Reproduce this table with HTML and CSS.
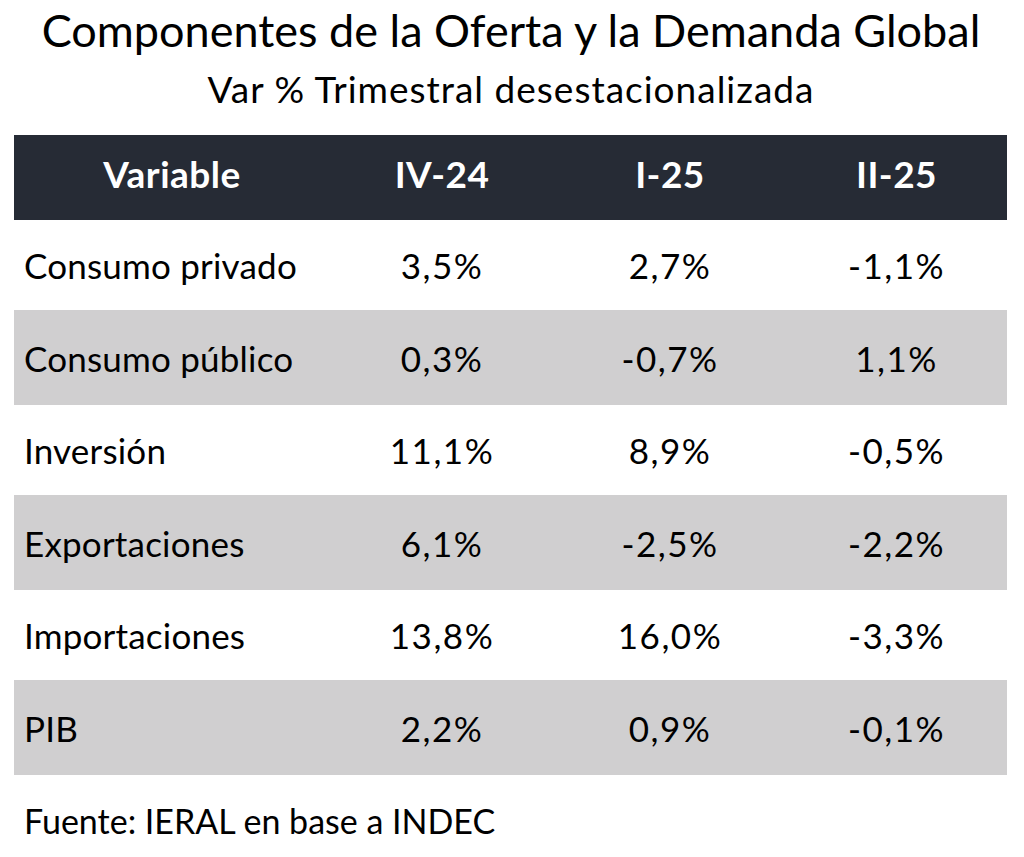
FILE: index.html
```html
<!DOCTYPE html>
<html lang="es">
<head>
<meta charset="utf-8">
<title>Componentes de la Oferta y la Demanda Global</title>
<link rel="stylesheet" href="styles.css">
</head>
<body>
<div class="page">
  <h1 class="title">Componentes de la Oferta y la Demanda Global</h1>
  <p class="subtitle">Var % Trimestral desestacionalizada</p>
  <table class="data">
    <thead>
      <tr><th class="c1">Variable</th><th class="c2">IV-24</th><th class="c3">I-25</th><th class="c4">II-25</th></tr>
    </thead>
    <tbody>
      <tr><td class="label">Consumo privado</td><td>3,5%</td><td>2,7%</td><td>-1,1%</td></tr>
      <tr><td class="label">Consumo público</td><td>0,3%</td><td>-0,7%</td><td>1,1%</td></tr>
      <tr><td class="label">Inversión</td><td>11,1%</td><td>8,9%</td><td>-0,5%</td></tr>
      <tr><td class="label">Exportaciones</td><td>6,1%</td><td>-2,5%</td><td>-2,2%</td></tr>
      <tr><td class="label">Importaciones</td><td>13,8%</td><td>16,0%</td><td>-3,3%</td></tr>
      <tr><td class="label">PIB</td><td>2,2%</td><td>0,9%</td><td>-0,1%</td></tr>
    </tbody>
  </table>
  <p class="source">Fuente: IERAL en base a INDEC</p>
</div>
</body>
</html>
```

FILE: styles.css
```css
html, body {
  margin: 0;
  padding: 0;
  background: #ffffff;
}
.page {
  font-family: Lato, "Open Sans", sans-serif;
  color: #000000;
  padding: 0 16px 0 14px;
}
.title {
  margin: 0;
  padding-top: 2px;
  font-size: 45px;
  font-weight: 400;
  line-height: 56px;
  text-align: center;
}
.subtitle {
  margin: 9px 0 0;
  font-size: 37px;
  line-height: 44px;
  text-align: center;
  letter-spacing: 1px;
}
.data {
  margin-top: 24px;
  width: 993px;
  border-collapse: collapse;
  table-layout: fixed;
}
.data th {
  background: #262b35;
  color: #ffffff;
  font-weight: 700;
  font-size: 37px;
  height: 77px;
  padding: 0 0 8px;
  text-align: center;
  letter-spacing: 0.5px;
}
.c1 { width: 316px; }
.c2 { width: 224px; }
.c3 { width: 232px; }
.c4 { width: 221px; }
.data td {
  font-size: 35px;
  height: 90px;
  padding: 0;
  text-align: center;
  letter-spacing: 1.5px;
}
.data tbody tr:nth-child(even) td {
  background: #d0cfd0;
  height: 95px;
}
.data td.label {
  text-align: left;
  padding-left: 10px;
  letter-spacing: 0.2px;
}
.source {
  margin: 26px 0 0 10px;
  font-size: 34px;
  line-height: 40px;
}
```
